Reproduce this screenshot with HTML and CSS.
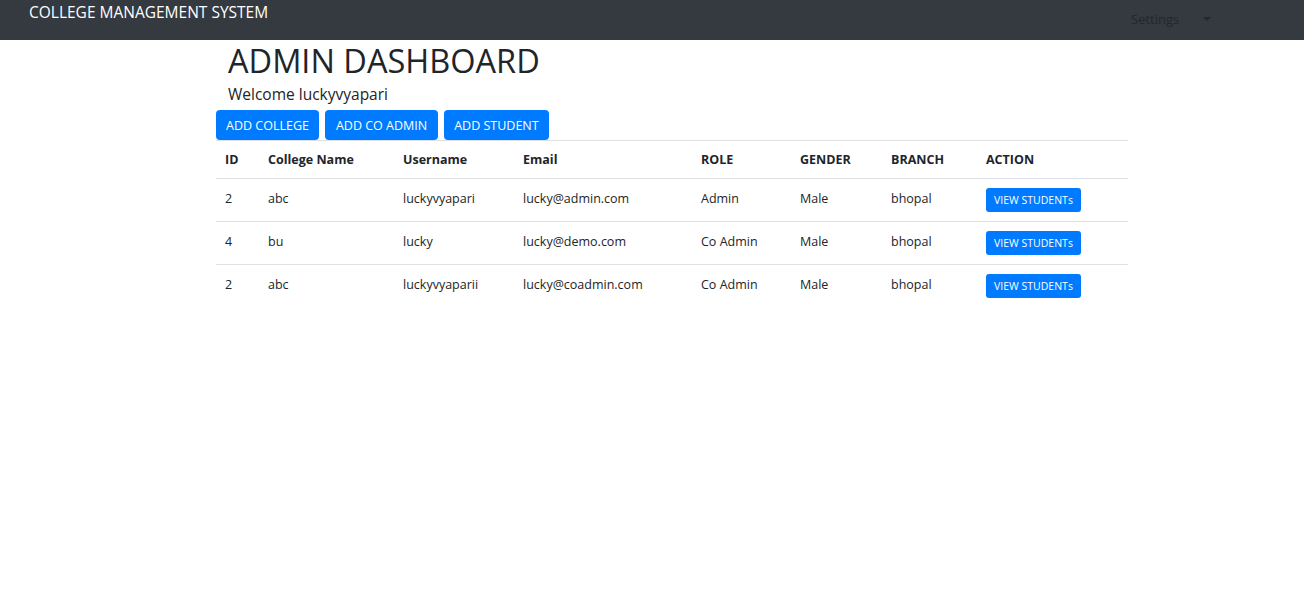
FILE: index.html
```html
<!DOCTYPE html>
<html>
<head>
<meta charset="utf-8">
<link rel="stylesheet" href="styles.css">
</head>
<body>
<nav class="navbar">
  <span class="brand">COLLEGE MANAGEMENT SYSTEM</span>
  <div class="settings"><span>Settings</span><span class="caret"></span></div>
</nav>
<main class="container">
  <h2 class="title">ADMIN DASHBOARD</h2>
  <h5 class="welcome">Welcome luckyvyapari</h5>
  <div class="actions">
    <button class="btn">ADD COLLEGE</button>
    <button class="btn">ADD CO ADMIN</button>
    <button class="btn">ADD STUDENT</button>
  </div>
  <table class="table">
    <colgroup>
      <col class="c1"><col class="c2"><col class="c3"><col class="c4"><col class="c5"><col class="c6"><col class="c7"><col class="c8">
    </colgroup>
    <thead>
      <tr><th>ID</th><th>College Name</th><th>Username</th><th>Email</th><th>ROLE</th><th>GENDER</th><th>BRANCH</th><th>ACTION</th></tr>
    </thead>
    <tbody>
      <tr><td>2</td><td>abc</td><td>luckyvyapari</td><td>lucky@admin.com</td><td>Admin</td><td>Male</td><td>bhopal</td><td class="act"><button class="btn-sm">VIEW STUDENTs</button></td></tr>
      <tr><td>4</td><td>bu</td><td>lucky</td><td>lucky@demo.com</td><td>Co Admin</td><td>Male</td><td>bhopal</td><td class="act"><button class="btn-sm">VIEW STUDENTs</button></td></tr>
      <tr><td>2</td><td>abc</td><td>luckyvyaparii</td><td>lucky@coadmin.com</td><td>Co Admin</td><td>Male</td><td>bhopal</td><td class="act"><button class="btn-sm">VIEW STUDENTs</button></td></tr>
    </tbody>
  </table>
</main>
</body>
</html>
```

FILE: styles.css
```css
* { box-sizing: border-box; }
body {
  margin: 0;
  font-family: "Open Sans", "Noto Sans", sans-serif;
  color: #212529;
  background: #fff;
}
.navbar {
  height: 40px;
  background: #343a40;
  display: flex;
  justify-content: space-between;
  align-items: flex-start;
  padding: 0 0 0 29px;
}
.brand {
  color: #fff;
  font-size: 15.5px;
  line-height: 18px;
  padding-top: 3px;
}
.settings {
  display: flex;
  align-items: center;
  margin-right: 93px;
  padding-top: 11px;
  color: #23272b;
  font-size: 13px;
  line-height: 16px;
}
.settings span:first-child { width: 72px; }
.caret {
  width: 0;
  height: 0;
  border-left: 4px solid transparent;
  border-right: 4px solid transparent;
  border-top: 4px solid #23272b;
}
.container {
  width: 912px;
  margin-left: 216px;
}
.title {
  margin: 0;
  padding: 2px 0 0 12px;
  font-size: 32.5px;
  font-weight: 500;
  line-height: 38px;
}
.welcome {
  margin: 0;
  padding: 4px 0 0 12px;
  font-size: 15.5px;
  font-weight: 500;
  line-height: 20px;
}
.actions {
  display: flex;
  gap: 6px;
  margin-top: 6px;
}
.btn {
  height: 30px;
  padding: 0 10px;
  border: none;
  border-radius: 4px;
  background: #007bff;
  color: #fff;
  font-family: inherit;
  font-size: 12.5px;
}
.btn:nth-child(2) { padding: 0 11px; }
.table {
  width: 912px;
  border-collapse: collapse;
  table-layout: fixed;
  font-size: 12.5px;
}
.c1 { width: 43px; }
.c2 { width: 135px; }
.c3 { width: 120px; }
.c4 { width: 178px; }
.c5 { width: 99px; }
.c6 { width: 91px; }
.c7 { width: 95px; }
.c8 { width: 151px; }
th, td {
  text-align: left;
  padding: 0 0 0 9px;
  border-top: 1px solid #dee2e6;
}
th {
  height: 38px;
  font-weight: 700;
  vertical-align: middle;
  border-bottom: 1px solid #dee2e6;
}
td {
  height: 43px;
  vertical-align: top;
  padding-top: 11px;
  line-height: 18px;
}
td.act { padding-top: 9px; }
.btn-sm {
  display: block;
  height: 24px;
  width: 95px;
  padding: 0;
  border: none;
  border-radius: 3px;
  background: #007bff;
  color: #fff;
  font-family: inherit;
  font-size: 10.5px;
}
```
